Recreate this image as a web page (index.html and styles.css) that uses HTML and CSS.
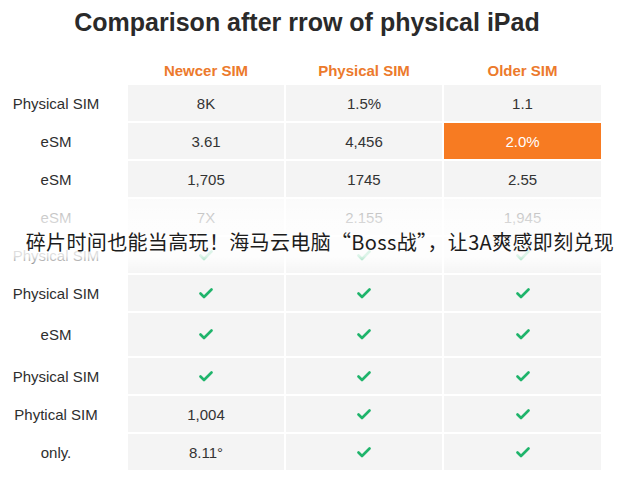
FILE: index.html
```html
<!DOCTYPE html>
<html>
<head>
<meta charset="utf-8">
<link rel="stylesheet" href="styles.css">
</head>
<body>
<div class="page">
  <h1 class="title">Comparison after rrow of physical iPad</h1>
  <div class="grid">
    <div class="hd"></div>
    <div class="hd">Newcer SIM</div>
    <div class="hd">Physical SIM</div>
    <div class="hd">Older SIM</div>

    <div class="lbl">Physical SIM</div>
    <div class="c">8K</div><div class="c">1.5%</div><div class="c">1.1</div>

    <div class="lbl">eSM</div>
    <div class="c">3.61</div><div class="c">4,456</div><div class="c hot">2.0%</div>

    <div class="lbl">eSM</div>
    <div class="c">1,705</div><div class="c">1745</div><div class="c">2.55</div>

    <div class="lbl">eSM</div>
    <div class="c">7X</div><div class="c">2.155</div><div class="c">1,945</div>

    <div class="lbl">Physical SIM</div>
    <div class="c"><svg class="ck" viewBox="0 0 14 11"><path d="M1.5 5.5 L5 9 L12.5 1.5"/></svg></div>
    <div class="c"><svg class="ck" viewBox="0 0 14 11"><path d="M1.5 5.5 L5 9 L12.5 1.5"/></svg></div>
    <div class="c"><svg class="ck" viewBox="0 0 14 11"><path d="M1.5 5.5 L5 9 L12.5 1.5"/></svg></div>

    <div class="lbl">Physical SIM</div>
    <div class="c"><svg class="ck" viewBox="0 0 14 11"><path d="M1.5 5.5 L5 9 L12.5 1.5"/></svg></div>
    <div class="c"><svg class="ck" viewBox="0 0 14 11"><path d="M1.5 5.5 L5 9 L12.5 1.5"/></svg></div>
    <div class="c"><svg class="ck" viewBox="0 0 14 11"><path d="M1.5 5.5 L5 9 L12.5 1.5"/></svg></div>

    <div class="lbl">eSM</div>
    <div class="c"><svg class="ck" viewBox="0 0 14 11"><path d="M1.5 5.5 L5 9 L12.5 1.5"/></svg></div>
    <div class="c"><svg class="ck" viewBox="0 0 14 11"><path d="M1.5 5.5 L5 9 L12.5 1.5"/></svg></div>
    <div class="c"><svg class="ck" viewBox="0 0 14 11"><path d="M1.5 5.5 L5 9 L12.5 1.5"/></svg></div>

    <div class="lbl">Physical SIM</div>
    <div class="c"><svg class="ck" viewBox="0 0 14 11"><path d="M1.5 5.5 L5 9 L12.5 1.5"/></svg></div>
    <div class="c"><svg class="ck" viewBox="0 0 14 11"><path d="M1.5 5.5 L5 9 L12.5 1.5"/></svg></div>
    <div class="c"><svg class="ck" viewBox="0 0 14 11"><path d="M1.5 5.5 L5 9 L12.5 1.5"/></svg></div>

    <div class="lbl">Phytical SIM</div>
    <div class="c">1,004</div>
    <div class="c"><svg class="ck" viewBox="0 0 14 11"><path d="M1.5 5.5 L5 9 L12.5 1.5"/></svg></div>
    <div class="c"><svg class="ck" viewBox="0 0 14 11"><path d="M1.5 5.5 L5 9 L12.5 1.5"/></svg></div>

    <div class="lbl">only.</div>
    <div class="c">8.11°</div>
    <div class="c"><svg class="ck" viewBox="0 0 14 11"><path d="M1.5 5.5 L5 9 L12.5 1.5"/></svg></div>
    <div class="c"><svg class="ck" viewBox="0 0 14 11"><path d="M1.5 5.5 L5 9 L12.5 1.5"/></svg></div>
  </div>
  <div class="caption-band">
    <div class="caption">碎片时间也能当高玩！海马云电脑“Boss战”，让3A爽感即刻兑现</div>
  </div>
</div>
</body>
</html>
```
FILE: styles.css
```css
html, body {
  margin: 0;
  padding: 0;
  background: #ffffff;
}
.page {
  position: relative;
  width: 640px;
  height: 480px;
  overflow: hidden;
  font-family: "Liberation Sans", Arial, sans-serif;
  color: #333333;
}
.title {
  margin: 0;
  padding-top: 8px;
  height: 57px;
  box-sizing: border-box;
  text-align: center;
  font-size: 25px;
  line-height: 29px;
  font-weight: bold;
  color: #2a2a2a;
  padding-right: 26px;
}
.grid {
  display: grid;
  grid-template-columns: 126px 156px 156px 157px;
  grid-template-rows: 26px repeat(6, 36px) 43px repeat(3, 36px);
  gap: 2px;
}
.hd {
  display: flex;
  align-items: center;
  justify-content: center;
  font-size: 15px;
  font-weight: bold;
  color: #ec7a2c;
}
.lbl {
  display: flex;
  align-items: center;
  justify-content: center;
  padding-right: 14px;
  font-size: 15px;
  color: #2e2e2e;
}
.c {
  display: flex;
  align-items: center;
  justify-content: center;
  background: #f4f4f4;
  font-size: 15px;
  color: #333333;
}
.hot {
  background: #f77b22;
  color: #ffffff;
}
.ck {
  width: 14px;
  height: 11px;
}
.ck path {
  fill: none;
  stroke: #1fb46b;
  stroke-width: 2.6;
  stroke-linecap: round;
  stroke-linejoin: round;
}
.caption-band {
  position: absolute;
  left: 0;
  top: 199px;
  width: 640px;
  height: 76px;
  box-sizing: border-box;
  padding-top: 10px;
  display: flex;
  align-items: center;
  justify-content: center;
  background: linear-gradient(to bottom,
    rgba(255,255,255,0.6) 0%,
    rgba(255,255,255,0.8) 30%,
    rgba(255,255,255,0.85) 75%,
    rgba(255,255,255,0.0) 100%);
}
.caption {
  font-family: "Noto Sans CJK SC", sans-serif;
  font-size: 20px;
  line-height: 26px;
  color: #1c1c1c;
  white-space: nowrap;
  letter-spacing: 0.35px;
}
```
